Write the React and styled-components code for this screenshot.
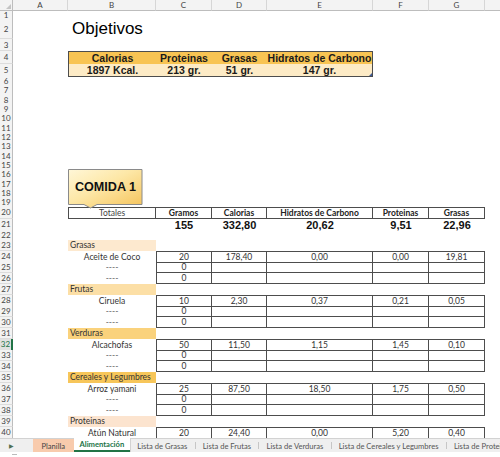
import React from "react";
import styled, { createGlobalStyle, css } from "styled-components";

const Global = createGlobalStyle`
  html, body { margin: 0; padding: 0; background: #fff; }
  body { width: 500px; height: 457px; overflow: hidden; }
  * { box-sizing: border-box; }
`;

const COLS = "13px 55px 88px 56px 55px 106px 56px 56px 56px";
const LINE = "#4d4d4d";

const Sheet = styled.div`
  position: relative;
  width: 500px;
  height: 457px;
  overflow: hidden;
  display: flex;
  flex-direction: column;
  background: #fff;
`;

const Grid = styled.div`
  flex: none;
  width: 541px;
  height: 438px;
  overflow: hidden;
`;

const Row = styled.div`
  display: grid;
  grid-template-columns: ${COLS};
  height: ${(p) => p.$h}px;
`;

const ColHead = styled.div`
  background: #f3f3f3;
  border-right: 1px solid #d6d6d6;
  border-bottom: 1px solid #bdbdbd;
  font: 8px "Lato", sans-serif;
  color: #444;
  display: flex;
  align-items: center;
  justify-content: center;
`;

const Corner = styled(ColHead)`
  position: relative;
  border-right-color: #bdbdbd;
  &::after {
    content: "";
    position: absolute;
    right: 1px;
    bottom: 1px;
    border-left: 5px solid transparent;
    border-bottom: 5px solid #c4c4c4;
  }
`;

const RowHead = styled.div`
  background: #f3f3f3;
  border-right: 1px solid #bdbdbd;
  border-bottom: 1px solid #dcdcdc;
  font: 8px "Lato", sans-serif;
  color: #444;
  display: flex;
  align-items: center;
  justify-content: center;
  ${(p) =>
    p.$active &&
    css`
      background: #e1e1e1;
      color: #217346;
      border-right: 2px solid #217346;
    `}
`;

const Cell = styled.div`
  display: flex;
  align-items: center;
  justify-content: center;
  min-width: 0;
  white-space: nowrap;
`;

const Title = styled(Cell)`
  justify-content: flex-start;
  align-items: flex-end;
  padding: 0 0 0 4px;
  font: 17px "Liberation Sans", Arial, sans-serif;
  color: #000;
`;

const GoalCell = styled(Cell)`
  position: relative;
  font: bold 10.5px "Liberation Sans", Arial, sans-serif;
  color: #1a1a1a;
  background: ${(p) => (p.$head ? "#f8c453" : "#fdebc6")};
  border-top: ${(p) => (p.$head ? `1px solid ${LINE}` : "none")};
  border-bottom: ${(p) => (p.$head ? "none" : `1px solid ${LINE}`)};
  border-left: ${(p) => (p.$first ? `1px solid ${LINE}` : "none")};
  border-right: ${(p) => (p.$last ? `1px solid ${LINE}` : "none")};
  ${(p) =>
    p.$handle &&
    css`
      &::after {
        content: "";
        position: absolute;
        right: 0;
        bottom: 0;
        border-left: 3px solid transparent;
        border-bottom: 3px solid #3d5a99;
      }
    `}
`;

const Callout = styled.div`
  position: absolute;
  left: 68px;
  top: 169px;
  width: 76px;
  height: 40px;
  display: flex;
  justify-content: center;
  padding-top: 10px;
`;

const CalloutShape = styled.svg`
  position: absolute;
  left: 0;
  top: 0;
`;

const CalloutText = styled.span`
  position: relative;
  font: bold 12.6px "Liberation Sans", Arial, sans-serif;
  color: #111;
  height: 16px;
  line-height: 16px;
  margin-left: -1px;
`;

const HeadCell = styled(Cell)`
  font: ${(p) => (p.$plain ? 400 : 700)} 8.5px "Lato", sans-serif;
  color: ${(p) => (p.$plain ? "#444" : "#222")};
  border-top: 1px solid ${LINE};
  border-bottom: 1px solid ${LINE};
  border-right: 1px solid ${LINE};
  border-left: ${(p) => (p.$first ? `1px solid ${LINE}` : "none")};
`;

const TotalCell = styled(Cell)`
  font: bold 11px "Liberation Sans", Arial, sans-serif;
  color: #111;
`;

const CatCell = styled(Cell)`
  justify-content: flex-start;
  padding-left: 2px;
  background: ${(p) => p.$bg};
  font: 8.5px "Lato", sans-serif;
  color: #333;
`;

const ItemCell = styled(Cell)`
  font: 8.5px "Lato", sans-serif;
  color: ${(p) => (p.$dim ? "#666" : "#333")};
`;

const ValCell = styled(Cell)`
  font: 8.5px "Lato", sans-serif;
  color: #333;
  border-right: 1px solid ${LINE};
  border-bottom: 1px solid ${LINE};
  border-left: ${(p) => (p.$first ? `1px solid ${LINE}` : "none")};
  border-top: ${(p) => (p.$top ? `1px solid ${LINE}` : "none")};
`;

const TabBar = styled.div`
  flex: none;
  height: 14px;
  display: flex;
  align-items: stretch;
  background: #efefef;
  border-top: 1px solid #d2d2d2;
`;

const NavArrow = styled.div`
  width: 33px;
  flex: none;
  display: flex;
  align-items: center;
  padding-left: 9px;
  color: #4f6f52;
  font: 6px "DejaVu Sans", sans-serif;
`;

const Tab = styled.div`
  flex: none;
  display: flex;
  align-items: center;
  justify-content: center;
  padding: 0 ${(p) => p.$pad ?? 7.2}px;
  font: 7.6px "Lato", sans-serif;
  color: #555;
  white-space: nowrap;
  ${(p) =>
    p.$color &&
    css`
      background: ${p.$color};
      color: #444;
    `}
  ${(p) =>
    p.$active &&
    css`
      background: #fff;
      color: #217346;
      font-weight: 700;
      margin-top: -1px;
      border-bottom: 2px solid #217346;
      box-shadow: 1px 0 0 #d2d2d2;
    `}
`;

const Sep = styled.div`
  flex: none;
  width: 1px;
  background: #c6c6c6;
  margin: 3px 0;
`;

const StatusBar = styled.div`
  flex: 1;
  background: #fff;
  position: relative;
  &::before {
    content: "";
    position: absolute;
    left: 12px;
    top: 2px;
    width: 5px;
    height: 1px;
    background: #bbb;
  }
`;

const Blank = () => <Cell />;

const LETTERS = ["A", "B", "C", "D", "E", "F", "G", ""];

const groups = [
  { name: "Grasas", bg: "#fde9cf", start: 23, item: ["Aceite de Coco", "20", "178,40", "0,00", "0,00", "19,81"] },
  { name: "Frutas", bg: "#fcdfa6", start: 27, item: ["Ciruela", "10", "2,30", "0,37", "0,21", "0,05"] },
  { name: "Verduras", bg: "#fad27c", start: 31, item: ["Alcachofas", "50", "11,50", "1,15", "1,45", "0,10"] },
  { name: "Cereales y Legumbres", bg: "#f7c65a", start: 35, item: ["Arroz yamani", "25", "87,50", "18,50", "1,75", "0,50"] },
  { name: "Proteinas", bg: "#fce4cf", start: 39, item: ["Atún Natural", "20", "24,40", "0,00", "5,20", "0,40"] },
];

const EMPTY_ROWS_6_19 = Array.from({ length: 14 }, (_, i) => i + 6);

function ValueRow({ n, name, vals, top, dim }) {
  return (
    <Row $h={11}>
      <RowHead $active={n === 32}>{n}</RowHead>
      <Blank />
      <ItemCell $dim={dim}>{name}</ItemCell>
      {vals.map((v, i) => (
        <ValCell key={i} $first={i === 0} $top={top}>
          {v}
        </ValCell>
      ))}
      <Blank />
    </Row>
  );
}

function EmptyRow({ n, h }) {
  return (
    <Row $h={h}>
      <RowHead>{n}</RowHead>
      {LETTERS.map((l, i) => (
        <Blank key={i} />
      ))}
    </Row>
  );
}

export default function App() {
  const groupRows = [];
  groups.forEach((g) => {
    groupRows.push(
      <Row $h={11} key={`c${g.start}`}>
        <RowHead>{g.start}</RowHead>
        <Blank />
        <CatCell $bg={g.bg}>{g.name}</CatCell>
        <Blank />
        <Blank />
        <Blank />
        <Blank />
        <Blank />
        <Blank />
      </Row>
    );
    const [name, ...vals] = g.item;
    groupRows.push(<ValueRow key={`v${g.start}`} n={g.start + 1} name={name} vals={vals} top />);
    if (g.start + 2 <= 40) {
      groupRows.push(
        <ValueRow key={`a${g.start}`} n={g.start + 2} name="----" dim vals={["0", "", "", "", ""]} />
      );
      groupRows.push(
        <ValueRow key={`b${g.start}`} n={g.start + 3} name="----" dim vals={["0", "", "", "", ""]} />
      );
    }
  });

  return (
    <Sheet>
      <Global />
      <Grid>
        <Row $h={10}>
          <Corner />
          {LETTERS.map((l, i) => (
            <ColHead key={i}>{l}</ColHead>
          ))}
        </Row>
        <EmptyRow n={1} h={9} />
        <Row $h={20}>
          <RowHead>2</RowHead>
          <Blank />
          <Title>Objetivos</Title>
          <Blank />
          <Blank />
          <Blank />
          <Blank />
          <Blank />
          <Blank />
        </Row>
        <EmptyRow n={3} h={12} />
        <Row $h={13}>
          <RowHead>4</RowHead>
          <Blank />
          <GoalCell $head $first>Calorias</GoalCell>
          <GoalCell $head>Proteinas</GoalCell>
          <GoalCell $head>Grasas</GoalCell>
          <GoalCell $head $last>Hidratos de Carbono</GoalCell>
          <Blank />
          <Blank />
          <Blank />
        </Row>
        <Row $h={12}>
          <RowHead>5</RowHead>
          <Blank />
          <GoalCell $first>1897 Kcal.</GoalCell>
          <GoalCell>213 gr.</GoalCell>
          <GoalCell>51 gr.</GoalCell>
          <GoalCell $last $handle>147 gr.</GoalCell>
          <Blank />
          <Blank />
          <Blank />
        </Row>
        {EMPTY_ROWS_6_19.map((n) => (
          <EmptyRow key={n} n={n} h={131 / 14} />
        ))}
        <Row $h={12}>
          <RowHead>20</RowHead>
          <Blank />
          <HeadCell $first $plain>Totales</HeadCell>
          <HeadCell>Gramos</HeadCell>
          <HeadCell>Calorias</HeadCell>
          <HeadCell>Hidratos de Carbono</HeadCell>
          <HeadCell>Proteinas</HeadCell>
          <HeadCell>Grasas</HeadCell>
          <Blank />
        </Row>
        <Row $h={11.5}>
          <RowHead>21</RowHead>
          <Blank />
          <Blank />
          <TotalCell>155</TotalCell>
          <TotalCell>332,80</TotalCell>
          <TotalCell>20,62</TotalCell>
          <TotalCell>9,51</TotalCell>
          <TotalCell>22,96</TotalCell>
          <Blank />
        </Row>
        <EmptyRow n={22} h={9.5} />
        {groupRows}
      </Grid>

      <Callout>
        <CalloutShape width="76" height="40" viewBox="0 0 76 40">
          <defs>
            <linearGradient id="calloutFill" x1="0" y1="0" x2="1" y2="1">
              <stop offset="0" stopColor="#fff7d8" />
              <stop offset="0.45" stopColor="#fde7a6" />
              <stop offset="1" stopColor="#f5c35a" />
            </linearGradient>
          </defs>
          <path
            d="M0.5 0.5 H74 V35.5 H29 L22.5 39 L16 35.5 H0.5 Z"
            fill="url(#calloutFill)"
            stroke="#8a8a8a"
            strokeWidth="1"
          />
        </CalloutShape>
        <CalloutText>COMIDA 1</CalloutText>
      </Callout>

      <TabBar>
        <NavArrow>▶</NavArrow>
        <Tab $color="#f8cbad" $pad={8.5}>Planilla</Tab>
        <Tab $active $pad={6}>Alimentación</Tab>
        <Tab>Lista de Grasas</Tab>
        <Sep />
        <Tab>Lista de Frutas</Tab>
        <Sep />
        <Tab>Lista de Verduras</Tab>
        <Sep />
        <Tab>Lista de Cereales y Legumbres</Tab>
        <Sep />
        <Tab>Lista de Proteinas</Tab>
      </TabBar>
      <StatusBar />
    </Sheet>
  );
}
